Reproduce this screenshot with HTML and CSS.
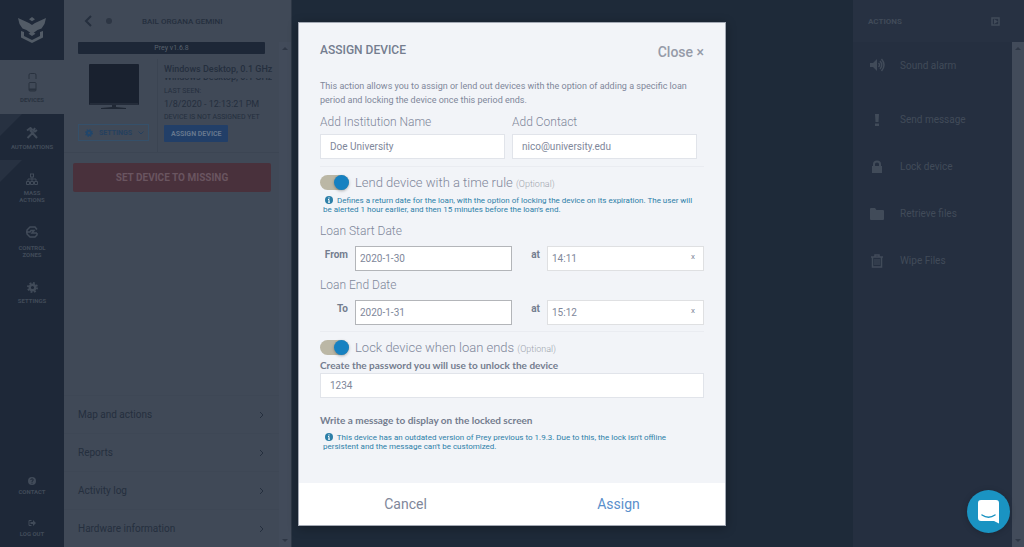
FILE: index.html
```html
<!DOCTYPE html>
<html lang="en">
<head>
  <meta charset="UTF-8">
  <meta name="viewport" content="width=device-width, initial-scale=1.0">
  <title>Prey - Assign device</title>
  <link rel="stylesheet" href="styles.css">
</head>
<body>
  <div class="app">
    <nav class="sidebar">
      <a class="logo" href="#" aria-label="Prey">
        <svg width="28" height="26" viewBox="0 0 28 26" fill="currentColor">
          <path d="M14 0l3 2.200-3 2-3-2zM0 1l11 5 3 2 3-2 11-5-1.500 6-3 4.500-4 1.500-5.500 4-5.500-4-4-1.500-3-4.500z"/>
          <path d="M14 14.500l3.500 2.200L14 19l-3.500-2.300zM3 14l3 1v4l8 4 8-4v-4l3-1v6.500L14 26 3 20.500z"/>
        </svg>
      </a>
      <a class="nav-item active" href="#">
        <svg width="9" height="19" viewBox="0 0 9 19" fill="none" stroke="currentColor">
          <path d="M1 6V2q0-1.500 1.500-1.500h4Q8 .5 8 2v4"/>
          <rect x="1" y="9.500" width="7" height="8.500" rx="1"/>
          <path d="M1 16.500h7" stroke-width="2"/>
        </svg>
        <span>DEVICES</span>
      </a>
      <a class="nav-item ribbon" href="#">
        <svg width="12" height="12" viewBox="0 0 12 12" fill="none" stroke="currentColor" stroke-width="2">
          <path d="M1 3.500L4.500 1l2 2M4 3l7 8M11 3L9 4.500 7.500 3.500 9 1M7.500 5L1.500 11"/>
        </svg>
        <span>AUTOMATIONS</span>
      </a>
      <a class="nav-item ribbon" href="#">
        <svg width="12" height="12" viewBox="0 0 12 12" fill="none" stroke="currentColor">
          <rect x="4.500" y="1" width="3" height="3"/>
          <path d="M6 4v4M2 8V6h8v2"/>
          <path d="M.5 8.500h3v3h-3zM4.500 8.500h3v3h-3zM8.500 8.500h3v3h-3z"/>
        </svg>
        <span>MASS<br>ACTIONS</span>
      </a>
      <a class="nav-item zones" href="#">
        <svg width="12" height="12" viewBox="0 0 12 12" fill="none" stroke="currentColor" stroke-width="1.500">
          <path d="M11 3.500L9 1H4L1 4v4l3 3h5l2-2V7"/>
          <path d="M0 6h4l1-1.500h3L6 7h5"/>
        </svg>
        <span>CONTROL<br>ZONES</span>
      </a>
      <a class="nav-item" href="#">
        <svg width="11" height="11" viewBox="0 0 12 12" fill="none" stroke="currentColor">
          <circle cx="6" cy="6" r="3" stroke-width="2.500"/>
          <circle cx="6" cy="6" r="5" stroke-width="2" stroke-dasharray="2 1.930"/>
        </svg>
        <span>SETTINGS</span>
      </a>
      <div class="nav-bottom">
        <a class="nav-small" href="#">
          <svg width="8" height="8" viewBox="0 0 8 8">
            <circle cx="4" cy="4" r="4" fill="currentColor"/>
            <path d="M2.700 3Q3 1.700 4 1.700T5.300 3Q5.300 3.800 4 4.300V5M4 5.700v1" fill="none" stroke="#1e2838"/>
          </svg>
          <span>CONTACT</span>
        </a>
        <a class="nav-small" href="#">
          <svg width="8" height="8" viewBox="0 0 8 8">
            <path d="M3.500 1.500H1v5h2.500" fill="none" stroke="currentColor"/>
            <path d="M2.500 3H5V1l3 3-3 3V5H2.500z" fill="currentColor"/>
          </svg>
          <span>LOG OUT</span>
        </a>
      </div>
    </nav>

    <section class="device-panel">
      <header class="panel-header">
        <button class="back" aria-label="Back">
          <svg width="8" height="12" viewBox="0 0 8 12" fill="none" stroke="currentColor" stroke-width="2"><path d="M7 1L2 6l5 5"/></svg>
        </button>
        <span class="dot"></span>
        <h1>BAIL ORGANA GEMINI</h1>
      </header>
      <div class="panel-scroll">
        <div class="panel-content">
          <div class="version">Prey v1.6.8</div>
          <div class="device-card">
            <div class="device-left">
              <svg width="50" height="46" viewBox="0 0 50 46">
                <rect width="50" height="41" rx="1" fill="#19212f"/>
                <path d="M1 40h48" stroke="#313946"/>
                <path d="M23 41h4v2l10 1v1H12v-1l11-1z" fill="#202835"/>
              </svg>
              <button class="settings">
                <svg width="8" height="8" viewBox="0 0 12 12" fill="none" stroke="#21466b">
                  <circle cx="6" cy="6" r="3" stroke-width="3"/>
                  <circle cx="6" cy="6" r="5" stroke-width="2" stroke-dasharray="2 1.930"/>
                </svg>
                <span>SETTINGS</span>
                <svg width="6" height="4" viewBox="0 0 6 4" fill="none" stroke="currentColor"><path d="M.5.5L3 3 5.500.5"/></svg>
              </button>
            </div>
            <div class="device-info">
              <strong>Windows Desktop, 0.1 GHz</strong>
              <div class="cut-line"><strong>Windows Desktop, 0.1 GHz</strong></div>
              <span>LAST SEEN:</span>
              <span class="seen">1/8/2020 - 12:13:21 PM</span>
              <span>DEVICE IS NOT ASSIGNED YET</span>
              <button class="assign-device">ASSIGN DEVICE</button>
            </div>
          </div>
          <button class="missing">SET DEVICE TO MISSING</button>
          <div class="panel-links">
            <a href="#">Map and actions <svg width="5" height="8" viewBox="0 0 5 8"><path d="M1 1l3 3-3 3"/></svg></a>
            <a href="#">Reports <svg width="5" height="8" viewBox="0 0 5 8"><path d="M1 1l3 3-3 3"/></svg></a>
            <a href="#">Activity log <svg width="5" height="8" viewBox="0 0 5 8"><path d="M1 1l3 3-3 3"/></svg></a>
            <a href="#">Hardware information <svg width="5" height="8" viewBox="0 0 5 8"><path d="M1 1l3 3-3 3"/></svg></a>
          </div>
        </div>
        <div class="scrollbar">
          <svg width="6" height="3" viewBox="0 0 6 3"><path d="M0 3l3-3 3 3z"/></svg>
          <svg width="6" height="3" viewBox="0 0 6 3"><path d="M0 0l3 3 3-3z"/></svg>
        </div>
      </div>
    </section>

    <main class="map"></main>

    <aside class="actions">
      <header class="actions-header">
        <h2>ACTIONS</h2>
        <svg width="9" height="9" viewBox="0 0 9 9"><rect x="1" y="1" width="7" height="7" fill="none" stroke="currentColor" stroke-width="1.500"/><path d="M3 2l4 2.500L3 7z" fill="currentColor"/></svg>
      </header>
      <div class="actions-scroll">
        <div class="actions-list">
          <button>
            <svg width="16" height="14" viewBox="0 0 16 14"><path d="M1 5h3l4-4v12L4 9H1z" fill="currentColor"/><path d="M9.500 5q2 2 0 4M11 3q3.500 4 0 8M12.500 1q5 6 0 12" fill="none" stroke="currentColor" stroke-width="1.500"/></svg>
            Sound alarm
          </button>
          <button>
            <svg width="16" height="14" viewBox="0 0 16 14" fill="currentColor"><path d="M6 1h4l-.5 8h-3zM6 10.500h4V13H6z"/></svg>
            Send message
          </button>
          <button>
            <svg width="16" height="14" viewBox="0 0 16 14"><path d="M3 6h10v7H3z" fill="currentColor"/><path d="M5 6V4q0-2.500 3-2.500T11 4v2" fill="none" stroke="currentColor" stroke-width="2"/></svg>
            Lock device
          </button>
          <button>
            <svg width="16" height="14" viewBox="0 0 16 14" fill="currentColor"><path d="M1 2q0-1 1-1h4l1.500 2H14q1 0 1 1v8q0 1-1 1H2q-1 0-1-1z"/></svg>
            Retrieve files
          </button>
          <button>
            <svg width="16" height="14" viewBox="0 0 16 14" fill="none" stroke="currentColor"><path d="M2 3h12M6 3V1h4v2M3.500 3v10h9V3" stroke-width="1.500"/><path d="M6 5v6M8 5v6M10 5v6"/></svg>
            Wipe Files
          </button>
        </div>
        <div class="scrollbar">
          <svg width="6" height="3" viewBox="0 0 6 3"><path d="M0 3l3-3 3 3z"/></svg>
          <svg width="6" height="3" viewBox="0 0 6 3"><path d="M0 0l3 3 3-3z"/></svg>
        </div>
      </div>
    </aside>
  </div>

  <div class="overlay">
    <form class="modal" role="dialog" aria-labelledby="modal-title">
      <div class="modal-body">
        <div class="modal-header">
          <h2 id="modal-title">ASSIGN DEVICE</h2>
          <button type="button" class="close">Close ×</button>
        </div>
        <p class="intro">This action allows you to assign or lend out devices with the option of adding a specific loan<br>period and locking the device once this period ends.</p>

        <div class="two-fields">
          <div>
            <label class="big-label" for="institution">Add Institution Name</label>
            <input type="text" id="institution" value="Doe University">
          </div>
          <div>
            <label class="big-label" for="contact">Add Contact</label>
            <input type="text" id="contact" value="nico@university.edu">
          </div>
        </div>

        <div class="rule-section">
          <div class="toggle-row">
            <input type="checkbox" class="toggle" id="lend" checked>
            <label for="lend">Lend device with a time rule <small>(Optional)</small></label>
          </div>
          <p class="note">
            <svg width="8" height="8" viewBox="0 0 8 8"><circle cx="4" cy="4" r="4" fill="#2d7fa8"/><path d="M4 1.300v1.200M3 3.500h1v2.700M3 6.200h2" fill="none" stroke="#fff"/></svg>
            Defines a return date for the loan, with the option of locking the device on its expiration. The user will<br>be alerted 1 hour earlier, and then 15 minutes before the loan's end.
          </p>
          <h3 class="big-label start-label">Loan Start Date</h3>
          <div class="date-row">
            <label for="from-date">From</label>
            <input type="text" class="date" id="from-date" value="2020-1-30">
            <label for="from-time">at</label>
            <div class="time"><input type="text" id="from-time" value="14:11"><button type="button" aria-label="Clear start time">x</button></div>
          </div>
          <h3 class="big-label">Loan End Date</h3>
          <div class="date-row">
            <label for="to-date">To</label>
            <input type="text" class="date" id="to-date" value="2020-1-31">
            <label for="to-time">at</label>
            <div class="time"><input type="text" id="to-time" value="15:12"><button type="button" aria-label="Clear end time">x</button></div>
          </div>
        </div>

        <div class="rule-section">
          <div class="toggle-row">
            <input type="checkbox" class="toggle" id="lock" checked>
            <label for="lock">Lock device when loan ends <small>(Optional)</small></label>
          </div>
          <label class="bold-label" for="password">Create the password you will use to unlock the device</label>
          <input type="text" id="password" value="1234">
          <h3 class="bold-label message-label">Write a message to display on the locked screen</h3>
          <p class="note">
            <svg width="8" height="8" viewBox="0 0 8 8"><circle cx="4" cy="4" r="4" fill="#2d7fa8"/><path d="M4 1.300v1.200M3 3.500h1v2.700M3 6.200h2" fill="none" stroke="#fff"/></svg>
            This device has an outdated version of Prey previous to 1.9.3. Due to this, the lock isn't offline<br>persistent and the message can't be customized.
          </p>
        </div>
      </div>
      <div class="modal-footer">
        <button type="button">Cancel</button>
        <button type="submit" class="primary">Assign</button>
      </div>
    </form>
  </div>

  <button class="chat" aria-label="Open chat">
    <svg width="22" height="24" viewBox="0 0 22 24">
      <path d="M3 0h15q3 0 3 3v20.500L16 21H3q-3 0-3-3V3q0-3 3-3z" fill="#fff"/>
      <path d="M4 15q6.500 4.500 13 0" fill="none" stroke="#1a93c2" stroke-width="1.500" stroke-linecap="round"/>
    </svg>
  </button>
</body>
</html>
```
FILE: styles.css
```css
:root {
  --bg: #1e2a39;
  --sidebar: #1e2838;
  --panel: #404957;
  --panel-text: #252f3e;
  --actions: #252f40;
  --muted: #414b59;
  --modal-bg: #f2f4f8;
  --text: #80879a;
  --bold-text: #747d8f;
  --note: #2d7fa8;
  --blue: #1681c1;
}

* {
  box-sizing: border-box;
}

body {
  margin: 0;
  font-family: Roboto, 'Liberation Sans', sans-serif;
  font-size: 10px;
  background: var(--bg);
  overflow: hidden;
}

button {
  font: inherit;
  color: inherit;
  background: none;
  border: none;
  padding: 0;
  cursor: pointer;
}

a {
  color: inherit;
  text-decoration: none;
}

h1, h2, h3, p {
  margin: 0;
}

.app {
  display: flex;
  height: 100vh;
}

/* sidebar */
.sidebar {
  width: 64px;
  display: flex;
  flex-direction: column;
  background: var(--sidebar);
  color: var(--muted);
  font-size: 6px;
  font-weight: bold;
  line-height: 7px;
  text-align: center;
}

.logo {
  height: 60px;
  display: flex;
  align-items: center;
  justify-content: center;
  color: #525b66;
}

.nav-item {
  display: flex;
  flex-direction: column;
  align-items: center;
  gap: 4px;
  padding: 13px 0 5px;
  min-height: 46px;
}

.nav-item.active {
  background: var(--panel);
  color: #29323f;
  height: 54px;
}

.nav-item.ribbon {
  background: linear-gradient(135deg, #273141 15px, transparent 16px);
}

.nav-item.zones {
  padding-top: 12px;
  margin-bottom: 6px;
  gap: 6px;
}

.nav-item.ribbon + .zones {
  margin-top: 6px;
}

.nav-bottom {
  margin-top: auto;
  padding-bottom: 10px;
  display: grid;
  gap: 24px;
}

.nav-small {
  display: flex;
  flex-direction: column;
  align-items: center;
  gap: 3px;
}

/* device panel */
.device-panel {
  width: 228px;
  display: flex;
  flex-direction: column;
  background: var(--panel);
  color: var(--panel-text);
  border-right: 1px solid #2d3745;
}

.panel-header {
  height: 42px;
  display: flex;
  align-items: center;
  padding: 0 20px;
}

.back svg {
  display: block;
}

.dot {
  width: 6px;
  height: 6px;
  border-radius: 50%;
  background: #2d3644;
  margin-left: 14px;
}

.panel-header h1 {
  margin-left: 30px;
  font-size: 8px;
  font-weight: 500;
}

.panel-scroll {
  flex: 1;
  display: flex;
}

.panel-content {
  flex: 1;
  display: flex;
  flex-direction: column;
}

.version {
  margin: 0 14px;
  height: 12px;
  line-height: 12px;
  background: #1d2737;
  color: #58616d;
  font-size: 7px;
  text-align: center;
  border-radius: 1px;
}

.device-card {
  display: flex;
  margin-top: 5px;
  padding-left: 14px;
  height: 94px;
  border-bottom: 1px solid #3c4553;
}

.device-left {
  width: 80px;
  padding: 5px 8px 0 0;
  display: flex;
  flex-direction: column;
  align-items: center;
  gap: 14px;
  border-right: 1px solid #3b4452;
}

.settings {
  width: 100%;
  height: 17px;
  display: flex;
  align-items: center;
  justify-content: space-between;
  padding: 0 4px 0 6px;
  border: 1px solid #35506a;
  color: #25405f;
  font-size: 7px;
  font-weight: bold;
}

.device-info {
  flex: 1;
  display: flex;
  flex-direction: column;
  align-items: flex-start;
  padding: 4px 0 0 6px;
  font-size: 7px;
  line-height: 12px;
  white-space: nowrap;
}

.device-info strong {
  font-size: 9px;
  font-weight: 500;
}

.cut-line {
  height: 5px;
  margin: 3px 0 2px;
  overflow: hidden;
  display: flex;
  align-items: flex-end;
}

.device-info .seen {
  font-size: 9px;
  line-height: 14px;
}

.assign-device {
  margin-top: 2px;
  height: 17px;
  padding: 0 7px;
  background: #223f68;
  color: #66778d;
  border-radius: 1px;
  font-size: 7px;
  font-weight: bold;
}

.missing {
  margin: 10px 8px 0 9px;
  height: 29px;
  background: #49313c;
  color: #6a5560;
  border-radius: 2px;
  font-size: 10px;
  font-weight: bold;
}

.panel-links {
  margin-top: auto;
}

.panel-links a {
  display: flex;
  align-items: center;
  justify-content: space-between;
  height: 38px;
  padding: 0 15px 0 14px;
  border-top: 1px solid #3e4755;
}

.panel-links svg {
  fill: none;
  stroke: currentColor;
}

.scrollbar {
  width: 12px;
  display: flex;
  flex-direction: column;
  justify-content: space-between;
  align-items: center;
  padding: 5px 0;
  background: #424b5a;
  fill: #2e3745;
}

.map {
  flex: 1;
}

/* actions */
.actions {
  width: 171px;
  display: flex;
  flex-direction: column;
  background: var(--actions);
  color: var(--muted);
}

.actions-header {
  height: 42px;
  display: flex;
  align-items: center;
  justify-content: space-between;
  padding: 0 24px 0 15px;
  background: #273142;
}

.actions-header h2 {
  font-size: 8px;
}

.actions-scroll {
  flex: 1;
  display: flex;
}

.actions-list {
  flex: 1;
}

.actions-list button {
  display: flex;
  align-items: center;
  gap: 15px;
  width: 100%;
  height: 47px;
  padding-left: 16px;
}

.actions-list button:first-child {
  height: 46px;
  margin-bottom: 8px;
}

/* modal */
.overlay {
  position: fixed;
  inset: 0;
  display: flex;
  align-items: center;
  justify-content: center;
}

.modal {
  width: 428px;
  border: 1px solid #a3a9b4;
  background: #fff;
  color: var(--text);
  box-shadow: 0 2px 10px rgba(0, 0, 0, 0.3);
}

.modal-body {
  padding: 20px 21px 32px;
  background: var(--modal-bg);
}

.modal-header {
  display: flex;
  align-items: flex-start;
  justify-content: space-between;
  height: 36px;
}

.modal-header h2 {
  font-size: 12px;
  font-weight: 500;
  line-height: 14px;
  color: var(--bold-text);
}

.close {
  font-size: 14px;
  font-weight: 500;
  line-height: 18px;
  color: #969ba8;
}

.intro {
  font-size: 9px;
  line-height: 14px;
}

.big-label {
  display: block;
  font-size: 12px;
  font-weight: 300;
  line-height: 16px;
}

.modal input[type="text"] {
  width: 100%;
  height: 25px;
  padding: 0 9px;
  background: #fff;
  border: 1px solid #e1e4ea;
  color: var(--text);
  font: inherit;
}

.two-fields {
  display: grid;
  grid-template-columns: 1fr 1fr;
  gap: 7px;
  padding: 7px 7px 7px 0;
}

.two-fields .big-label {
  margin-bottom: 4px;
}

.rule-section {
  border-top: 1px solid #eaecf1;
  padding-top: 8px;
}

.toggle-row {
  display: flex;
  align-items: center;
  gap: 6px;
  height: 15px;
  font-size: 13px;
  font-weight: 300;
}

.toggle-row small {
  font-size: 9px;
  color: #a0a4ad;
}

.toggle {
  appearance: none;
  width: 29px;
  height: 15px;
  margin: 0;
  border-radius: 8px;
  background: #bbb7a5;
  display: flex;
}

.toggle::before {
  content: '';
  width: 15px;
  height: 15px;
  border-radius: 50%;
  background: var(--blue);
  box-shadow: 0 1px 3px rgba(0, 0, 0, 0.3);
}

.toggle:checked::before {
  margin-left: auto;
}

.note {
  padding: 6px 0 0 3px;
  font-size: 8px;
  line-height: 9px;
  color: var(--note);
}

.note svg {
  margin: 0 2px;
  vertical-align: -1px;
}

.start-label {
  margin-top: 9px;
}

.date-row {
  display: grid;
  grid-template-columns: 28px 1fr 21px 1fr;
  gap: 7px;
  margin: 7px 0 6px;
}

.date-row label {
  padding-top: 3px;
  text-align: right;
  font-weight: bold;
  color: var(--bold-text);
}

.modal .date-row .date {
  padding: 0 4px;
  border-color: #b3b5b9;
}

.time {
  display: flex;
  height: 25px;
  background: #fff;
  border: 1px solid #dfe0e2;
}

.modal .time input {
  flex: 1;
  min-width: 0;
  height: 23px;
  padding: 0 4px;
  border: none;
}

.time button {
  width: 20px;
  height: 19px;
  font-size: 8px;
}

.bold-label {
  display: block;
  margin: 4px 0 1px;
  font-family: Lato, sans-serif;
  font-size: 10px;
  font-weight: bold;
  line-height: 13px;
  color: var(--bold-text);
}

.message-label {
  margin: 16px 0 0;
}

.modal-footer {
  display: grid;
  grid-template-columns: 1fr 1fr;
  height: 42px;
  background: #fff;
  font-size: 14px;
}

.modal-footer .primary {
  color: #5a8fcc;
}

/* chat launcher */
.chat {
  position: fixed;
  right: 14px;
  bottom: 14px;
  width: 43px;
  height: 43px;
  border-radius: 50%;
  background: #1a93c2;
  display: flex;
  align-items: center;
  justify-content: center;
  box-shadow: 0 1px 6px rgba(0, 0, 0, 0.2);
}
```
